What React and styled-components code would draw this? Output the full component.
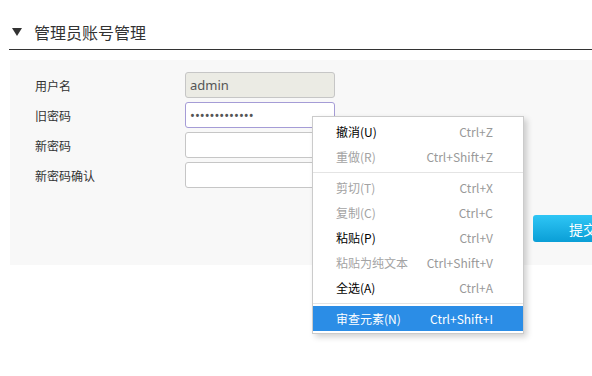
import React from "react";
import styled, { createGlobalStyle } from "styled-components";

const Global = createGlobalStyle`
  html, body { margin: 0; padding: 0; overflow: hidden; background: #fff; }
  body { font-family: "Noto Sans CJK SC", "Noto Sans", sans-serif; color: #333; }
`;

const Page = styled.div`
  position: relative;
  width: 680px;
  height: 376px;
  padding-left: 9px;
  box-sizing: border-box;
`;

const Header = styled.div`
  display: flex;
  align-items: center;
  gap: 12px;
  padding: 23px 0 8px 3px;
  border-bottom: 1px solid #333;
`;

const Triangle = styled.span`
  width: 0;
  height: 0;
  border-left: 5px solid transparent;
  border-right: 5px solid transparent;
  border-top: 8px solid #333;
`;

const Title = styled.h2`
  margin: 0;
  font-size: 16px;
  line-height: 18px;
  font-weight: normal;
  color: #333;
`;

const Panel = styled.div`
  margin: 10px 0 0 1px;
  background: #f8f8f8;
  padding: 12px 0 23px 25px;
`;

const Form = styled.div`
  display: grid;
  grid-template-columns: 150px 150px;
  row-gap: 4px;
  align-items: center;
`;

const Label = styled.label`
  font-size: 12px;
  color: #333;
`;

const Input = styled.input`
  box-sizing: border-box;
  width: 150px;
  height: 26px;
  border: 1px solid ${(p) => (p.$focus ? "#a59cd6" : "#c6c6c6")};
  border-radius: 3px;
  background: ${(p) => (p.disabled ? "#ebebe4" : "#fff")};
  padding: 0 4px;
  font-family: "Noto Sans", sans-serif;
  font-size: 13px;
  color: #555;
  outline: none;
  -webkit-text-fill-color: #555;
`;

const ButtonRow = styled.div`
  display: flex;
  padding: 27px 0 0 498px;
`;

const Submit = styled.button`
  width: 100px;
  height: 27px;
  border: none;
  border-radius: 3px;
  background: linear-gradient(#2fc6f5, #0a9ed6);
  color: #fff;
  font-family: "Noto Sans CJK SC", sans-serif;
  font-size: 14px;
  padding: 0;
`;

const Menu = styled.div`
  position: absolute;
  left: 312px;
  top: 116px;
  width: 212px;
  box-sizing: border-box;
  background: #fff;
  border: 1px solid #cbcbcb;
  box-shadow: 3px 3px 6px rgba(0, 0, 0, 0.18);
  padding: 2px 0;
  font-size: 12px;
`;

const Item = styled.div`
  display: flex;
  justify-content: space-between;
  align-items: center;
  height: 25px;
  padding: 0 30px 0 23px;
  background: ${(p) => (p.$active ? "#2b8de6" : "transparent")};
  color: ${(p) => (p.$active ? "#fff" : p.$disabled ? "#a3a3a3" : "#000")};
`;

const Shortcut = styled.span`
  color: ${(p) => (p.$active ? "#fff" : "#999")};
`;

const Separator = styled.div`
  height: 1px;
  background: #e4e4e4;
  margin: 3px 0 2px;
`;

const items = [
  { label: "撤消(U)", key: "Ctrl+Z" },
  { label: "重做(R)", key: "Ctrl+Shift+Z", disabled: true },
  "sep",
  { label: "剪切(T)", key: "Ctrl+X", disabled: true },
  { label: "复制(C)", key: "Ctrl+C", disabled: true },
  { label: "粘贴(P)", key: "Ctrl+V" },
  { label: "粘贴为纯文本", key: "Ctrl+Shift+V", disabled: true },
  { label: "全选(A)", key: "Ctrl+A" },
  "sep",
  { label: "审查元素(N)", key: "Ctrl+Shift+I", active: true },
];

export default function App() {
  return (
    <Page>
      <Global />
      <Header>
        <Triangle />
        <Title>管理员账号管理</Title>
      </Header>
      <Panel>
        <Form>
          <Label>用户名</Label>
          <Input disabled value="admin" readOnly />
          <Label>旧密码</Label>
          <Input $focus type="password" defaultValue="1234567890123" />
          <Label>新密码</Label>
          <Input type="password" />
          <Label>新密码确认</Label>
          <Input type="password" />
        </Form>
        <ButtonRow>
          <Submit>提交</Submit>
        </ButtonRow>
      </Panel>
      <Menu>
        {items.map((it, i) =>
          it === "sep" ? (
            <Separator key={i} />
          ) : (
            <Item key={i} $disabled={it.disabled} $active={it.active}>
              <span>{it.label}</span>
              <Shortcut $active={it.active}>{it.key}</Shortcut>
            </Item>
          )
        )}
      </Menu>
    </Page>
  );
}
